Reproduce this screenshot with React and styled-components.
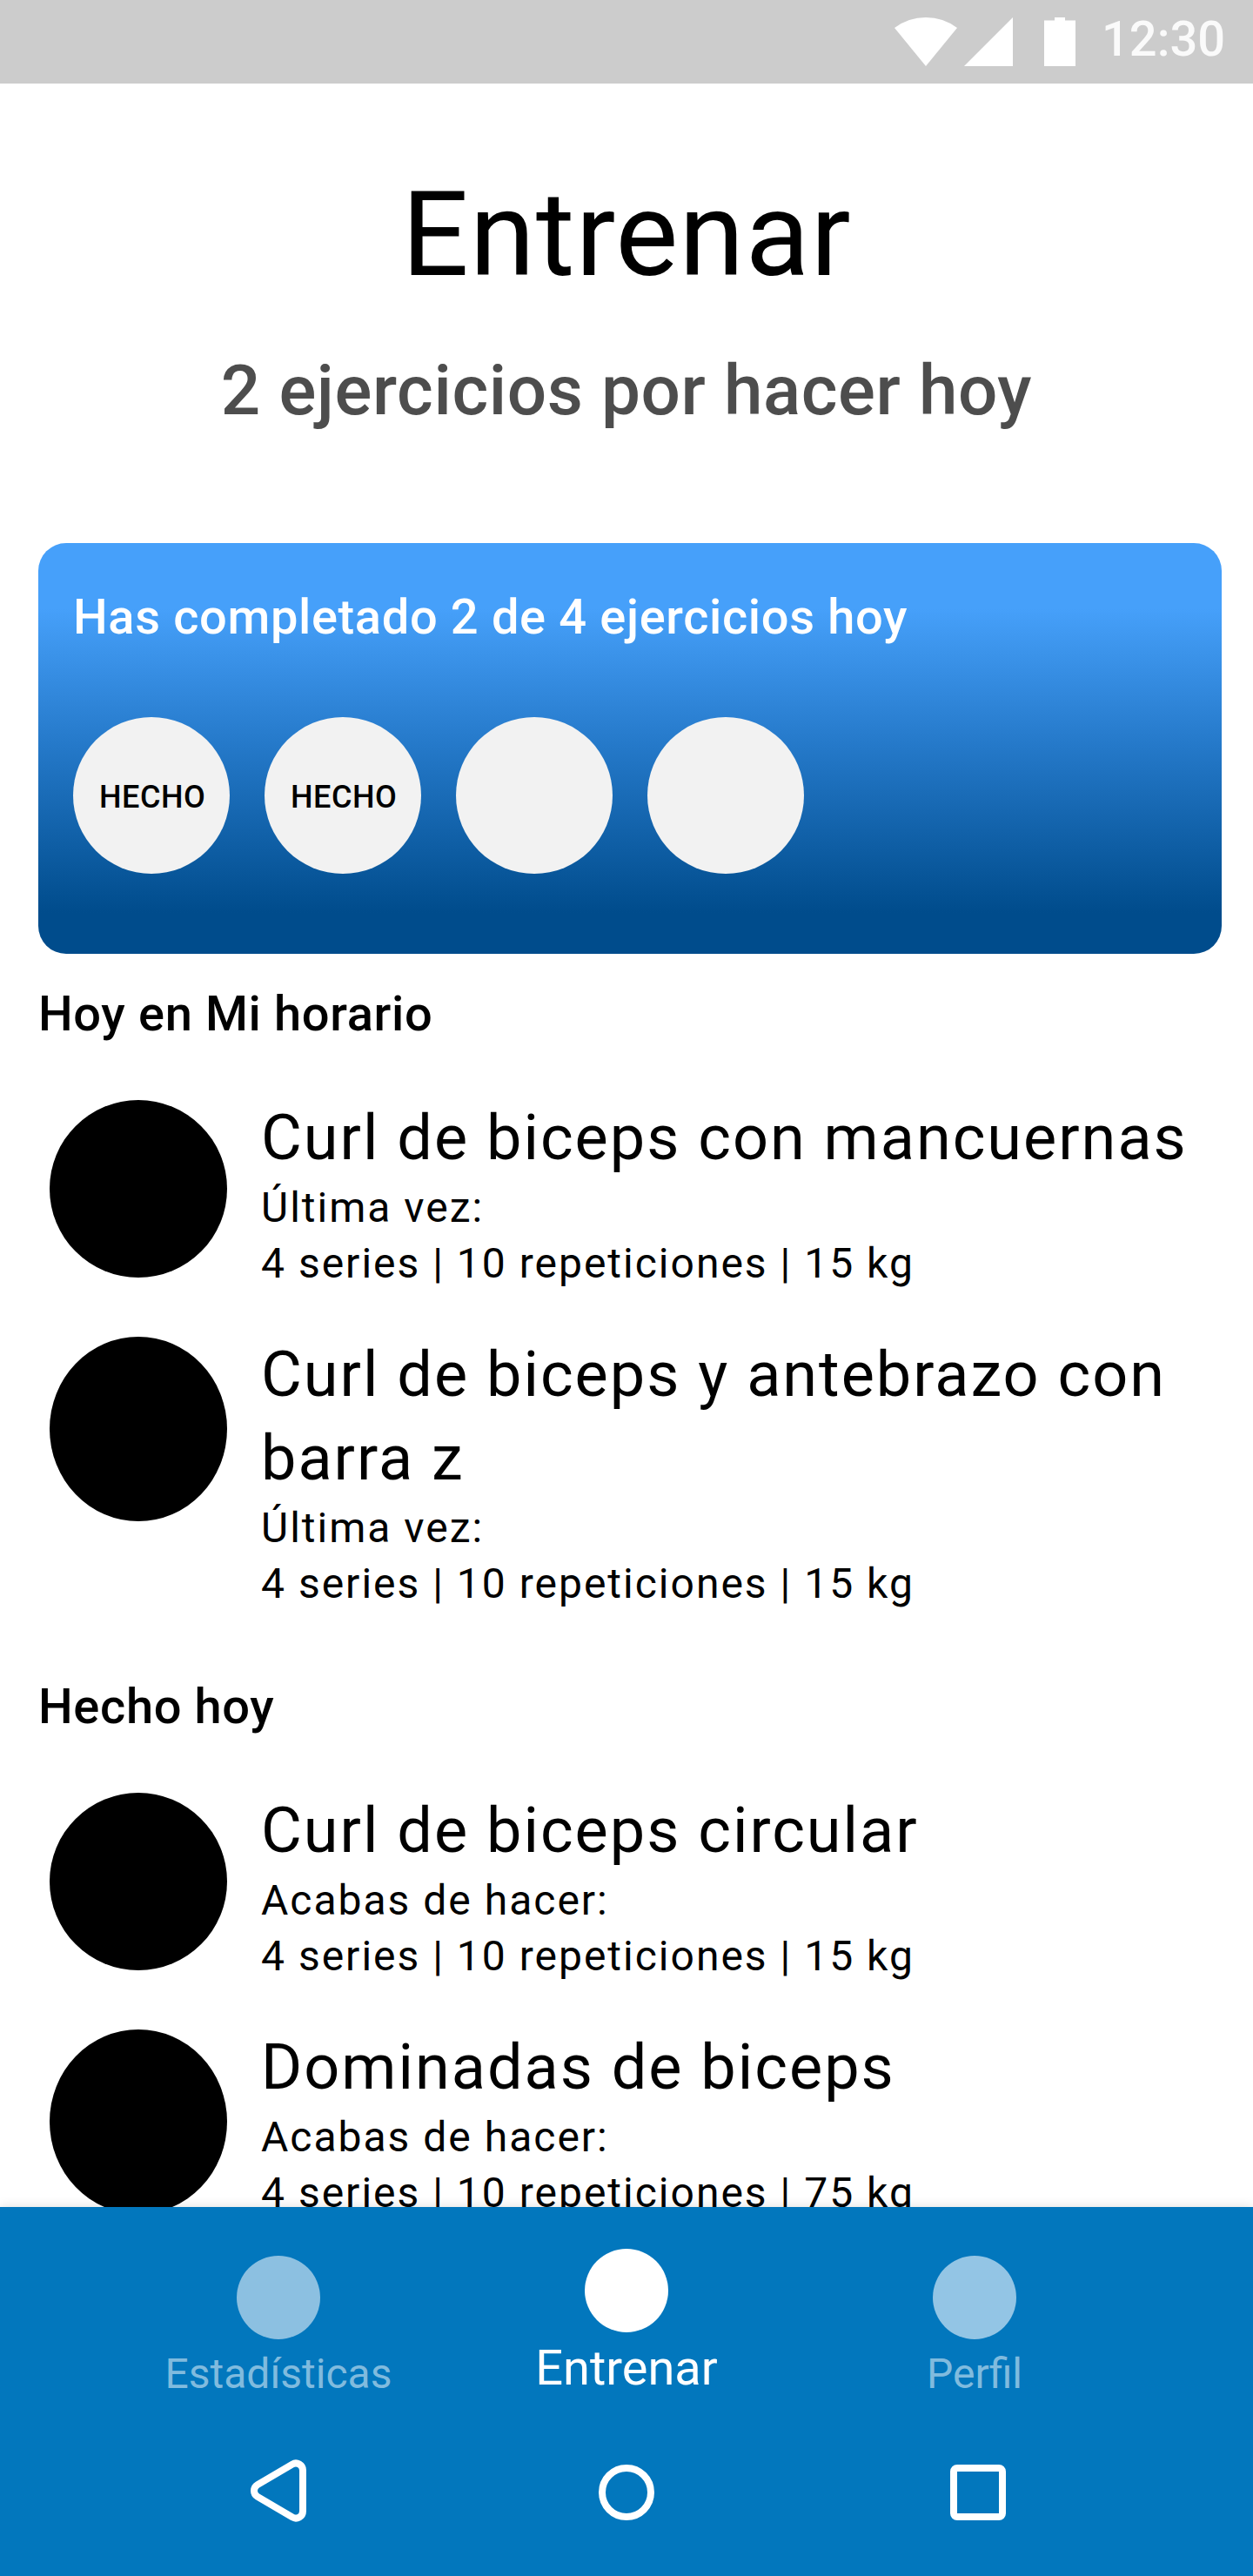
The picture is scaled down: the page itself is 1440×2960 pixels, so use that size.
import React from "react";
import styled, { createGlobalStyle } from "styled-components";

const GlobalStyle = createGlobalStyle`
  *, *::before, *::after { box-sizing: border-box; }
  body {
    margin: 0;
    background: #fff;
    color: #000;
    font-family: Roboto, "Noto Sans", sans-serif;
  }
  h1, h2, h3, p, ul { margin: 0; padding: 0; }
  ul { list-style: none; }
`;

const Screen = styled.div`
  display: flex;
  flex-direction: column;
  width: 1440px;
  height: 2960px;
  overflow: hidden;
  background: #fff;
`;

const StatusBar = styled.header`
  display: flex;
  flex: none;
  align-items: flex-start;
  justify-content: flex-end;
  height: 96px;
  padding: 12px 32px 0 0;
  background: #ccc;
`;

const StatusIcons = styled.svg`
  display: block;
  width: 208px;
  height: 56px;
  margin: 8px 28px 0 0;
  fill: #fff;
`;

const Clock = styled.span`
  width: 144px;
  padding-left: 2px;
  font-size: 56px;
  font-weight: 500;
  line-height: 66px;
  color: #fafafa;
  white-space: nowrap;
`;

const Content = styled.main`
  flex: 1;
  min-height: 0;
  padding: 94px 36px 0 44px;
  overflow: hidden;
`;

const Heading = styled.div`
  display: flex;
  flex-direction: column;
  align-items: center;
  gap: 51px;
  margin: 0 -36px 127px -44px;
`;

const Title = styled.h1`
  font-size: 136px;
  font-weight: 400;
  line-height: 160px;
  letter-spacing: 1px;
`;

const Subtitle = styled.h2`
  font-size: 80px;
  font-weight: 500;
  line-height: 96px;
  letter-spacing: 0.6px;
  color: #4d4d4d;
`;

const ProgressCard = styled.section`
  height: 472px;
  padding: 45px 40px 0;
  border-radius: 32px;
  background: linear-gradient(180deg, #46a0fa 16%, #2478c8 50%, #004c8c 90%);
`;

const CardText = styled.p`
  font-size: 56px;
  font-weight: 500;
  line-height: 80px;
  letter-spacing: 0.64px;
  color: #fff;
`;

const Badges = styled.div`
  display: flex;
  gap: 40px;
  margin-top: 75px;
`;

const Badge = styled.div`
  width: 180px;
  height: 180px;
  padding: 71px 0 0 30px;
  border-radius: 50%;
  background: #f2f2f2;
  font-size: 36px;
  font-weight: 500;
  line-height: 42px;
  letter-spacing: 0.5px;
`;

const SectionTitle = styled.h3`
  margin: ${(p) => p.$top}px 0 55px;
  font-size: 56px;
  font-weight: 500;
  line-height: 80px;
  letter-spacing: 0.64px;
`;

const List = styled.ul`
  display: flex;
  flex-direction: column;
  gap: 48px;
`;

const Row = styled.li`
  display: flex;
  gap: 39px;
  padding-left: 13px;
`;

const Thumb = styled.div`
  flex: none;
  width: 204px;
  height: ${(p) => (p.$tall ? 212 : 204)}px;
  margin: 4px 0 ${(p) => (p.$tall ? 8 : 16)}px;
  border-radius: 50%;
  background: #000;
`;

const RowBody = styled.div`
  flex: 1;
  min-width: 0;
`;

const Name = styled.p`
  font-size: 72px;
  line-height: 96px;
  letter-spacing: 2px;
`;

const Detail = styled.p`
  font-size: 48px;
  line-height: 64px;
  letter-spacing: 2px;
`;

const BottomBar = styled.footer`
  position: relative;
  flex: none;
  height: 424px;
  background: #0277bd;
  box-shadow: 0 0 12px rgba(0, 0, 0, 0.14);
`;

const Tabs = styled.nav`
  display: grid;
  grid-template-columns: repeat(3, 400px);
  justify-content: center;
  height: 280px;
`;

const Tab = styled.div`
  display: flex;
  flex-direction: column;
  align-items: center;
  padding-top: ${(p) => (p.$active ? 48 : 56)}px;
`;

const TabDot = styled.div`
  width: 96px;
  height: 96px;
  border-radius: 50%;
  background: ${(p) => p.$color};
`;

const TabLabel = styled.span`
  margin-top: ${(p) => (p.$active ? 8 : 11)}px;
  font-size: ${(p) => (p.$active ? 56 : 48)}px;
  line-height: ${(p) => (p.$active ? 66 : 57)}px;
  color: ${(p) => p.$color};
`;

const SystemNav = styled.div`
  display: grid;
  grid-template-columns: repeat(3, 404px);
  justify-content: center;
  justify-items: center;
  height: 144px;
`;

const NavIcon = styled.svg`
  display: block;
  width: 80px;
  height: 88px;
  fill: none;
  stroke: #fff;
  stroke-width: 8;
`;

const scheduled = [
  { name: "Curl de biceps con mancuernas", label: "Última vez:", stats: "4 series | 10 repeticiones | 15 kg" },
  { name: "Curl de biceps y antebrazo con barra z", label: "Última vez:", stats: "4 series | 10 repeticiones | 15 kg" },
];

const finished = [
  { name: "Curl de biceps circular", label: "Acabas de hacer:", stats: "4 series | 10 repeticiones | 15 kg" },
  { name: "Dominadas de biceps", label: "Acabas de hacer:", stats: "4 series | 10 repeticiones | 75 kg" },
];

const tabs = [
  { label: "Estadísticas", dot: "#8cc0e1", text: "#80bbde" },
  { label: "Entrenar", dot: "#fff", text: "#fff", active: true },
  { label: "Perfil", dot: "#93c5e5", text: "#80bbde" },
];

function ExerciseList({ items }) {
  return (
    <List>
      {items.map((item, i) => (
        <Row key={item.name}>
          <Thumb $tall={i === 1} />
          <RowBody>
            <Name>{item.name}</Name>
            <Detail>{item.label}</Detail>
            <Detail>{item.stats}</Detail>
          </RowBody>
        </Row>
      ))}
    </List>
  );
}

export default function App() {
  return (
    <>
      <GlobalStyle />
      <Screen>
        <StatusBar>
          <StatusIcons viewBox="0 0 208 56">
            <path d="M36 56 L0 12 Q16 0 36 0 Q56 0 72 12 Z" />
            <path d="M80 56 L136 0 V56 Z" />
            <path d="M172 3.6 H184 V0 H196 V3.6 H208 V56 H172 Z" />
          </StatusIcons>
          <Clock>12:30</Clock>
        </StatusBar>
        <Content>
          <Heading>
            <Title>Entrenar</Title>
            <Subtitle>2 ejercicios por hacer hoy</Subtitle>
          </Heading>
          <ProgressCard>
            <CardText>Has completado 2 de 4 ejercicios hoy</CardText>
            <Badges>
              <Badge>HECHO</Badge>
              <Badge>HECHO</Badge>
              <Badge />
              <Badge />
            </Badges>
          </ProgressCard>
          <SectionTitle $top={29}>Hoy en Mi horario</SectionTitle>
          <ExerciseList items={scheduled} />
          <SectionTitle $top={69}>Hecho hoy</SectionTitle>
          <ExerciseList items={finished} />
        </Content>
        <BottomBar>
          <Tabs>
            {tabs.map((t) => (
              <Tab key={t.label} $active={t.active}>
                <TabDot $color={t.dot} />
                <TabLabel $active={t.active} $color={t.text}>{t.label}</TabLabel>
              </Tab>
            ))}
          </Tabs>
          <SystemNav>
            <NavIcon viewBox="0 0 80 88">
              <path d="M59.95 15.6 A8 8 0 0 1 72 22.5 V69.5 A8 8 0 0 1 59.95 76.4 L19.95 52.9 A8 8 0 0 1 19.95 39.1 Z" />
            </NavIcon>
            <NavIcon viewBox="0 0 80 88">
              <circle cx="40" cy="48" r="28" />
            </NavIcon>
            <NavIcon viewBox="0 0 80 88">
              <rect x="12" y="20" width="56" height="56" rx="4" />
            </NavIcon>
          </SystemNav>
        </BottomBar>
      </Screen>
    </>
  );
}
